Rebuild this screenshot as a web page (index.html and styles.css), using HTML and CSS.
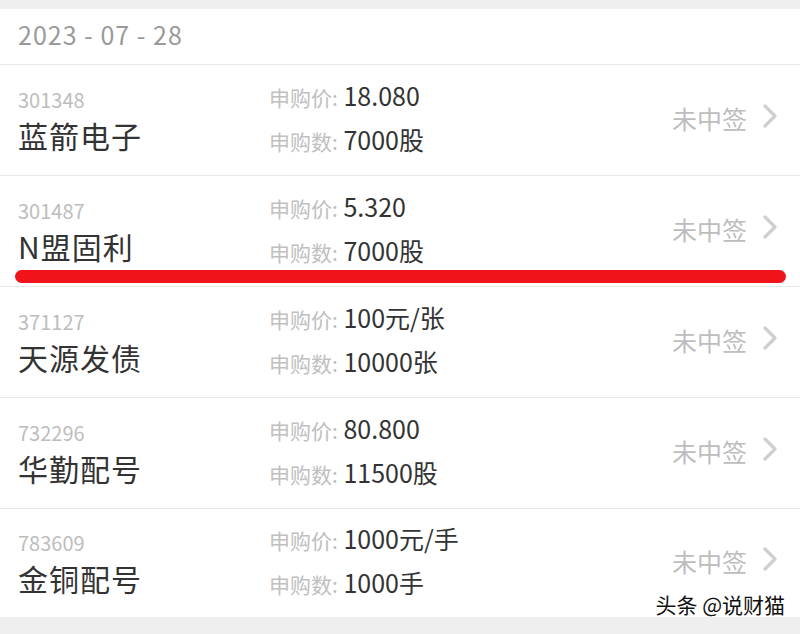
FILE: index.html
```html
<!DOCTYPE html>
<html lang="zh">
<head>
  <meta charset="UTF-8">
  <title>申购记录</title>
  <link rel="stylesheet" href="styles.css">
</head>
<body>
  <div class="page">
    <div class="date-head">2023 - 07 - 28</div>

    <div class="record">
      <div class="stock">
        <div class="code">301348</div>
        <div class="name">蓝箭电子</div>
      </div>
      <div class="detail">
        <div class="line"><span class="label">申购价:</span> 18.080</div>
        <div class="line"><span class="label">申购数:</span> 7000股</div>
      </div>
      <div class="status">未中签<svg class="chev" width="14" height="24" viewBox="0 0 14 24"><polyline points="2,2 12,12 2,22" fill="none" stroke="#cfcfcf" stroke-width="3.2" stroke-linecap="round" stroke-linejoin="round"/></svg></div>
    </div>

    <div class="record marked">
      <div class="stock">
        <div class="code">301487</div>
        <div class="name">N盟固利</div>
      </div>
      <div class="detail">
        <div class="line"><span class="label">申购价:</span> 5.320</div>
        <div class="line"><span class="label">申购数:</span> 7000股</div>
      </div>
      <div class="status">未中签<svg class="chev" width="14" height="24" viewBox="0 0 14 24"><polyline points="2,2 12,12 2,22" fill="none" stroke="#cfcfcf" stroke-width="3.2" stroke-linecap="round" stroke-linejoin="round"/></svg></div>
      <div class="underline"></div>
    </div>

    <div class="record">
      <div class="stock">
        <div class="code">371127</div>
        <div class="name">天源发债</div>
      </div>
      <div class="detail">
        <div class="line"><span class="label">申购价:</span> 100元/张</div>
        <div class="line"><span class="label">申购数:</span> 10000张</div>
      </div>
      <div class="status">未中签<svg class="chev" width="14" height="24" viewBox="0 0 14 24"><polyline points="2,2 12,12 2,22" fill="none" stroke="#cfcfcf" stroke-width="3.2" stroke-linecap="round" stroke-linejoin="round"/></svg></div>
    </div>

    <div class="record">
      <div class="stock">
        <div class="code">732296</div>
        <div class="name">华勤配号</div>
      </div>
      <div class="detail">
        <div class="line"><span class="label">申购价:</span> 80.800</div>
        <div class="line"><span class="label">申购数:</span> 11500股</div>
      </div>
      <div class="status">未中签<svg class="chev" width="14" height="24" viewBox="0 0 14 24"><polyline points="2,2 12,12 2,22" fill="none" stroke="#cfcfcf" stroke-width="3.2" stroke-linecap="round" stroke-linejoin="round"/></svg></div>
    </div>

    <div class="record last">
      <div class="stock">
        <div class="code">783609</div>
        <div class="name">金铜配号</div>
      </div>
      <div class="detail">
        <div class="line"><span class="label">申购价:</span> 1000元/手</div>
        <div class="line"><span class="label">申购数:</span> 1000手</div>
      </div>
      <div class="status">未中签<svg class="chev" width="14" height="24" viewBox="0 0 14 24"><polyline points="2,2 12,12 2,22" fill="none" stroke="#cfcfcf" stroke-width="3.2" stroke-linecap="round" stroke-linejoin="round"/></svg></div>
    </div>

    <div class="watermark">头条 @说财猫</div>
  </div>
</body>
</html>
```

FILE: styles.css
```css
* {
  margin: 0;
  padding: 0;
  box-sizing: border-box;
}

body {
  font-family: "Noto Sans CJK SC", "Noto Sans", sans-serif;
  background: #efefef;
  width: 800px;
  height: 634px;
  overflow: hidden;
}

.page {
  position: relative;
  margin-top: 9px;
  background: #fff;
}

/* 日期 */
.date-head {
  height: 56px;
  padding-left: 18px;
  line-height: 50px;
  font-size: 25px;
  letter-spacing: 1px;
  color: #9a9a9a;
  border-bottom: 1px solid #e9e9e9;
}

/* 记录行 */
.record {
  position: relative;
  height: 111px;
  display: flex;
  align-items: center;
  padding: 0 23px 0 18px;
  border-bottom: 1px solid #e9e9e9;
}

.record.last {
  height: 108px;
  border-bottom: none;
}

.stock {
  width: 251px;
  padding-top: 1px;
}

.code {
  font-size: 20px;
  line-height: 29px;
  color: #bdbdbd;
}

.name {
  font-size: 30px;
  line-height: 43px;
  letter-spacing: 1px;
  color: #333;
}

.detail {
  flex: 1;
  margin-top: -4px;
}

.line {
  font-size: 25px;
  line-height: 42px;
  color: #333;
}

.label {
  font-size: 21px;
  color: #c0c0c0;
}

.status {
  display: flex;
  align-items: center;
  gap: 16px;
  margin-top: -4px;
  margin-left: -2px;
  font-size: 25px;
  color: #bdbdbd;
}

.chev {
  margin-top: -4px;
}

/* 红色标注 */
.underline {
  position: absolute;
  left: 15px;
  right: 14px;
  bottom: 3px;
  height: 13px;
  border-radius: 7px;
  background: #f0141a;
}

.watermark {
  position: absolute;
  right: 15px;
  bottom: -2px;
  font-size: 21px;
  color: #111;
  text-shadow: 1px 1px 0 #fff, -1px -1px 0 #fff, 1px -1px 0 #fff, -1px 1px 0 #fff;
}
```
